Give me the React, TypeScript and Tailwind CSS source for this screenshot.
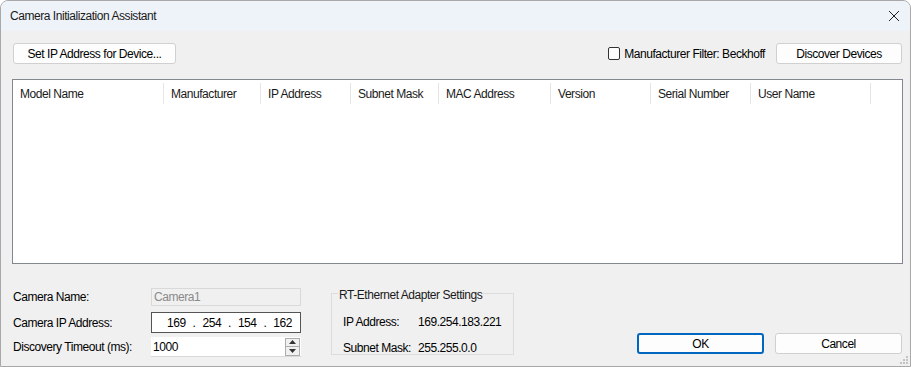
import * as React from "react";

const columns = [
  { name: "Model Name", w: 151 },
  { name: "Manufacturer", w: 97 },
  { name: "IP Address", w: 90 },
  { name: "Subnet Mask", w: 88 },
  { name: "MAC Address", w: 112 },
  { name: "Version", w: 100 },
  { name: "Serial Number", w: 100 },
  { name: "User Name", w: 120 },
];

const WinButton: React.FC<{ label: string; className?: string; primary?: boolean }> = ({
  label,
  className,
  primary,
}) => (
  <button
    className={
      "h-[21px] rounded-[3px] bg-[#fdfdfd] text-[12px] text-black flex items-center justify-center " +
      (primary ? "border-2 border-[#0067c0] " : "border border-[#d0d0d0] ") +
      (className || "")
    }
  >
    {label}
  </button>
);

export default function App() {
  return (
    <div
      className="w-[911px] h-[367px] bg-[#f0f0f0] border border-[#a8a8a8] rounded-t-[8px] overflow-hidden flex flex-col text-[12px] tracking-[-0.45px] text-black relative"
      style={{ fontFamily: '"Liberation Sans", Arial, sans-serif' }}
    >
      {/* title bar */}
      <div className="h-[30px] bg-[#eef3f9] flex items-center justify-between pl-[9px] pr-[8px] shrink-0">
        <span className="text-[12px] text-[#1a1a1a]">Camera Initialization Assistant</span>
        <svg width="12" height="12" viewBox="0 0 12 12" className="mr-[2px]">
          <path d="M1 1 L11 11 M11 1 L1 11" stroke="#222" strokeWidth="1" />
        </svg>
      </div>

      <div className="flex flex-col pl-[11px] pr-[7px] pt-[12px]">
        {/* top row */}
        <div className="flex items-center justify-between h-[21px]">
          <WinButton label="Set IP Address for Device..." className="w-[163px] ml-[1px]" />
          <div className="flex items-center">
            <div className="w-[12px] h-[13px] border border-[#333] rounded-[2px] bg-white mr-[4px]" />
            <span className="mr-[11px]">Manufacturer Filter: Beckhoff</span>
            <WinButton label="Discover Devices" className="w-[126px] mr-[1px]" />
          </div>
        </div>

        {/* list view */}
        <div className="mt-[15px] h-[185px] bg-white border border-[#828790] flex flex-col">
          <div className="flex h-[27px] items-stretch">
            {columns.map((c) => (
              <div
                key={c.name}
                style={{ width: c.w }}
                className="shrink-0 flex items-center pl-[7px] border-r border-[#e5e5e5] my-[3px] text-[#1a1a1a]"
              >
                {c.name}
              </div>
            ))}
          </div>
        </div>

        {/* bottom area */}
        <div className="flex mt-[24px]">
          <div className="flex flex-col w-[290px] ml-[1px]">
            <div className="flex items-center h-[18px]">
              <span className="w-[138px]">Camera Name:</span>
              <div className="w-[150px] h-[18px] border border-[#d9d9d9] bg-[#f0f0f0] text-[#8a8a8a] flex items-center pl-[2px]">
                Camera1
              </div>
            </div>
            <div className="flex items-center h-[21px] mt-[6px]">
              <span className="w-[138px]">Camera IP Address:</span>
              <div className="w-[150px] h-[21px] border border-[#555] bg-white flex items-center pl-[15px] pr-[8px] justify-between">
                <span>169</span>
                <span>.</span>
                <span>254</span>
                <span>.</span>
                <span>154</span>
                <span>.</span>
                <span>162</span>
              </div>
            </div>
            <div className="flex items-center h-[20px] mt-[4px]">
              <span className="w-[138px]">Discovery Timeout (ms):</span>
              <div className="w-[150px] h-[20px] bg-white border-b border-[#d9d9d9] flex items-center pl-[2px] justify-between">
                <span>1000</span>
                <div className="w-[15px] h-[18px] flex flex-col border border-[#adadad] mr-[1px]">
                  <div className="flex-1 flex items-center justify-center bg-[#f0f0f0] border-b border-[#adadad]">
                    <svg width="7" height="4" viewBox="0 0 7 4">
                      <path d="M0 4 L3.5 0 L7 4 Z" fill="#333" />
                    </svg>
                  </div>
                  <div className="flex-1 flex items-center justify-center bg-[#f0f0f0]">
                    <svg width="7" height="4" viewBox="0 0 7 4">
                      <path d="M0 0 L3.5 4 L7 0 Z" fill="#333" />
                    </svg>
                  </div>
                </div>
              </div>
            </div>
          </div>

          <div className="ml-[28px] mt-[5px] w-[183px] h-[62px] border border-[#dcdcdc] relative">
            <span className="absolute -top-[8px] left-[6px] bg-[#f0f0f0] px-[1px] text-[#1a1a1a]">
              RT-Ethernet Adapter Settings
            </span>
            <div className="flex mt-[19px] ml-[11px]">
              <span className="w-[75px]">IP Address:</span>
              <span>169.254.183.221</span>
            </div>
            <div className="flex mt-[8px] ml-[11px]">
              <span className="w-[75px]">Subnet Mask:</span>
              <span>255.255.0.0</span>
            </div>
          </div>

          <div className="flex-1 flex items-end justify-end pb-[3px] gap-[11px]">
            <WinButton label="OK" primary className="w-[127px]" />
            <WinButton label="Cancel" className="w-[127px] mr-[1px]" />
          </div>
        </div>
      </div>

      {/* size grip */}
      <svg width="10" height="10" viewBox="0 0 10 10" className="absolute right-[1px] bottom-[1px]">
        <rect x="7" y="1" width="2" height="2" fill="#c4c4c4" />
        <rect x="4" y="4" width="2" height="2" fill="#c4c4c4" />
        <rect x="7" y="4" width="2" height="2" fill="#c4c4c4" />
        <rect x="1" y="7" width="2" height="2" fill="#c4c4c4" />
        <rect x="4" y="7" width="2" height="2" fill="#c4c4c4" />
        <rect x="7" y="7" width="2" height="2" fill="#c4c4c4" />
      </svg>
    </div>
  );
}
